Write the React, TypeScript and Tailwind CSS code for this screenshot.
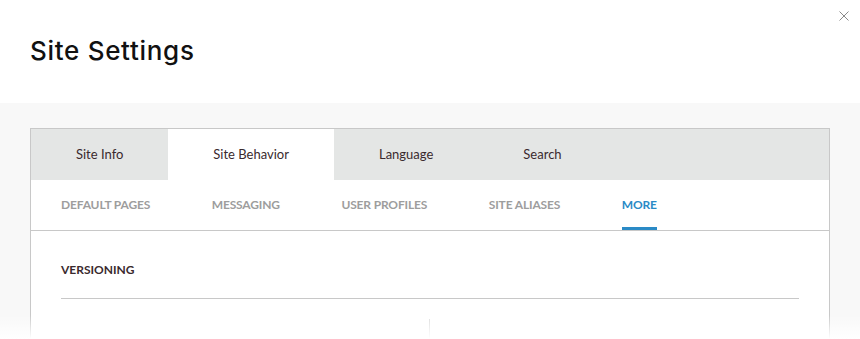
import React from 'react';

const TABS = ['Site Info', 'Site Behavior', 'Language', 'Search'];
const SUB_TABS = ['DEFAULT PAGES', 'MESSAGING', 'USER PROFILES', 'SITE ALIASES', 'MORE'];

export default function App() {
  const activeTab = 'Site Behavior';
  const activeSub = 'MORE';

  return (
    <div className="relative h-[339px] w-[860px] overflow-hidden bg-white font-['Lato',sans-serif]">
      {/* Header */}
      <div className="relative h-[103px] bg-white px-[30px] pt-[33px]">
        <h1 className="font-['Inter',sans-serif] text-[26px] leading-[36px] font-medium tracking-[0.7px] text-[#111]">Site Settings</h1>
        <button className="absolute right-[9px] top-[9px] flex h-[14px] w-[14px] items-center justify-center">
          <svg width="10" height="10" viewBox="0 0 10 10">
            <path d="M0.5 0.5 L9.5 9.5 M9.5 0.5 L0.5 9.5" stroke="#8a8a8a" strokeWidth="1" />
          </svg>
        </button>
      </div>

      {/* Body */}
      <div className="h-[236px] bg-[#f8f8f8] px-[30px] pt-[25px]">
        <div className="border border-[#c8c8c8] bg-white">
          {/* Main tabs */}
          <div className="flex h-[51px] bg-[#e4e6e5]">
            {TABS.map(t => (
              <div
                key={t}
                className={`flex items-center px-[45px] text-[13px] text-[#3a2a2e] ${t === activeTab ? 'bg-white' : ''}`}
              >
                {t}
              </div>
            ))}
          </div>

          {/* Sub tabs */}
          <div className="flex h-[51px] gap-[61.5px] border-b border-[#c8c8c8] pl-[30px]">
            {SUB_TABS.map(s => (
              <div
                key={s}
                className={`flex items-center border-b-[3px] pt-[3px] text-[12px] font-bold tracking-[-0.15px] ${
                  s === activeSub ? 'border-[#2a8ac6] text-[#2a8ac6]' : 'border-transparent text-[#9d9d9d]'
                }`}
              >
                {s}
              </div>
            ))}
          </div>

          {/* Content */}
          <div className="px-[30px] pt-[30px]">
            <div className="text-[12px] font-bold text-[#3a2a2e]">VERSIONING</div>
            <div className="mt-[19px] border-t border-[#c8c8c8]" />
            <div className="grid grid-cols-2 pt-[20px]">
              <div className="h-[40px] border-r border-[#dcdcdc]" />
              <div />
            </div>
          </div>
        </div>
      </div>

      {/* Bottom fade */}
      <div className="pointer-events-none absolute bottom-0 left-0 h-[24px] w-full bg-gradient-to-b from-transparent to-white" />
    </div>
  );
}
